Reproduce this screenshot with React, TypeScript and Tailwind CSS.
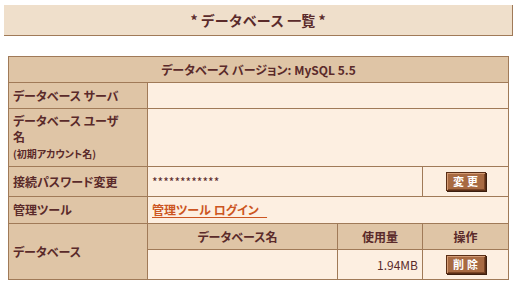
import React from "react";

const jp = "[font-family:'Noto_Sans_CJK_JP','Liberation_Sans',sans-serif]";

function Btn({ label }: { label: string }) {
  return (
    <button
      type="button"
      className="h-[19px] w-[40px] border border-[#5a2e16] bg-[#a86a42] pl-[3px] text-[11px] font-bold leading-none tracking-[3px] text-white shadow-[inset_1px_1px_0_#d39b74,inset_-1px_-1px_0_#7a4526,1px_1px_0_#3c1e0e]"
    >
      {label}
    </button>
  );
}

export default function App() {
  const th = "border border-[#a07a58] bg-[#dfc5a6] font-bold";
  const td = "border border-[#a07a58] bg-[#fdefe1]";

  return (
    <div className={`${jp} bg-white pl-[4px] pt-[5px] text-[#5a2a2a]`}>
      <div className="flex h-[31px] w-[509px] items-center justify-center border-b border-r border-[#a07a58] bg-[#efdfcb] text-[14px] font-bold">
        * データベース 一覧 *
      </div>

      <table className="ml-[4px] mt-[20px] w-[500px] table-fixed border-collapse text-[12px] [font-feature-settings:'palt']">
        <colgroup>
          <col className="w-[139px]" />
          <col className="w-[190px]" />
          <col className="w-[85px]" />
          <col className="w-[86px]" />
        </colgroup>
        <tbody>
          <tr className="h-[26px]">
            <th colSpan={4} className={`${th} text-center`}>
              データベース バージョン: MySQL 5.5
            </th>
          </tr>
          <tr className="h-[26px]">
            <th className={`${th} px-[4px] text-left`}>データベース サーバ</th>
            <td colSpan={3} className={td}></td>
          </tr>
          <tr className="h-[58px]">
            <th className={`${th} px-[4px] text-left leading-[16px]`}>
              データベース ユーザ
              <br />名
              <br />
              <span className="text-[10px]">(初期アカウント名)</span>
            </th>
            <td colSpan={3} className={td}></td>
          </tr>
          <tr className="h-[30px]">
            <th className={`${th} px-[4px] text-left`}>接続パスワード変更</th>
            <td colSpan={2} className={`${td} px-[4px]`}>************</td>
            <td className={`${td} text-center`}>
              <Btn label="変更" />
            </td>
          </tr>
          <tr className="h-[27px]">
            <th className={`${th} px-[4px] text-left`}>管理ツール</th>
            <td colSpan={3} className={`${td} px-[4px]`}>
              <a href="#" className="font-bold text-[#cc5522] underline underline-offset-2">
                管理ツール ログイン&nbsp;&nbsp;&nbsp;
              </a>
            </td>
          </tr>
          <tr className="h-[26px]">
            <th rowSpan={2} className={`${th} px-[4px] text-left`}>データベース</th>
            <th className={`${th} pr-[10px] text-center`}>データベース名</th>
            <th className={`${th} text-center`}>使用量</th>
            <th className={`${th} text-center`}>操作</th>
          </tr>
          <tr className="h-[30px]">
            <td className={td}></td>
            <td className={`${td} px-[4px] text-right`}>1.94MB</td>
            <td className={`${td} text-center`}>
              <Btn label="削除" />
            </td>
          </tr>
        </tbody>
      </table>
    </div>
  );
}
